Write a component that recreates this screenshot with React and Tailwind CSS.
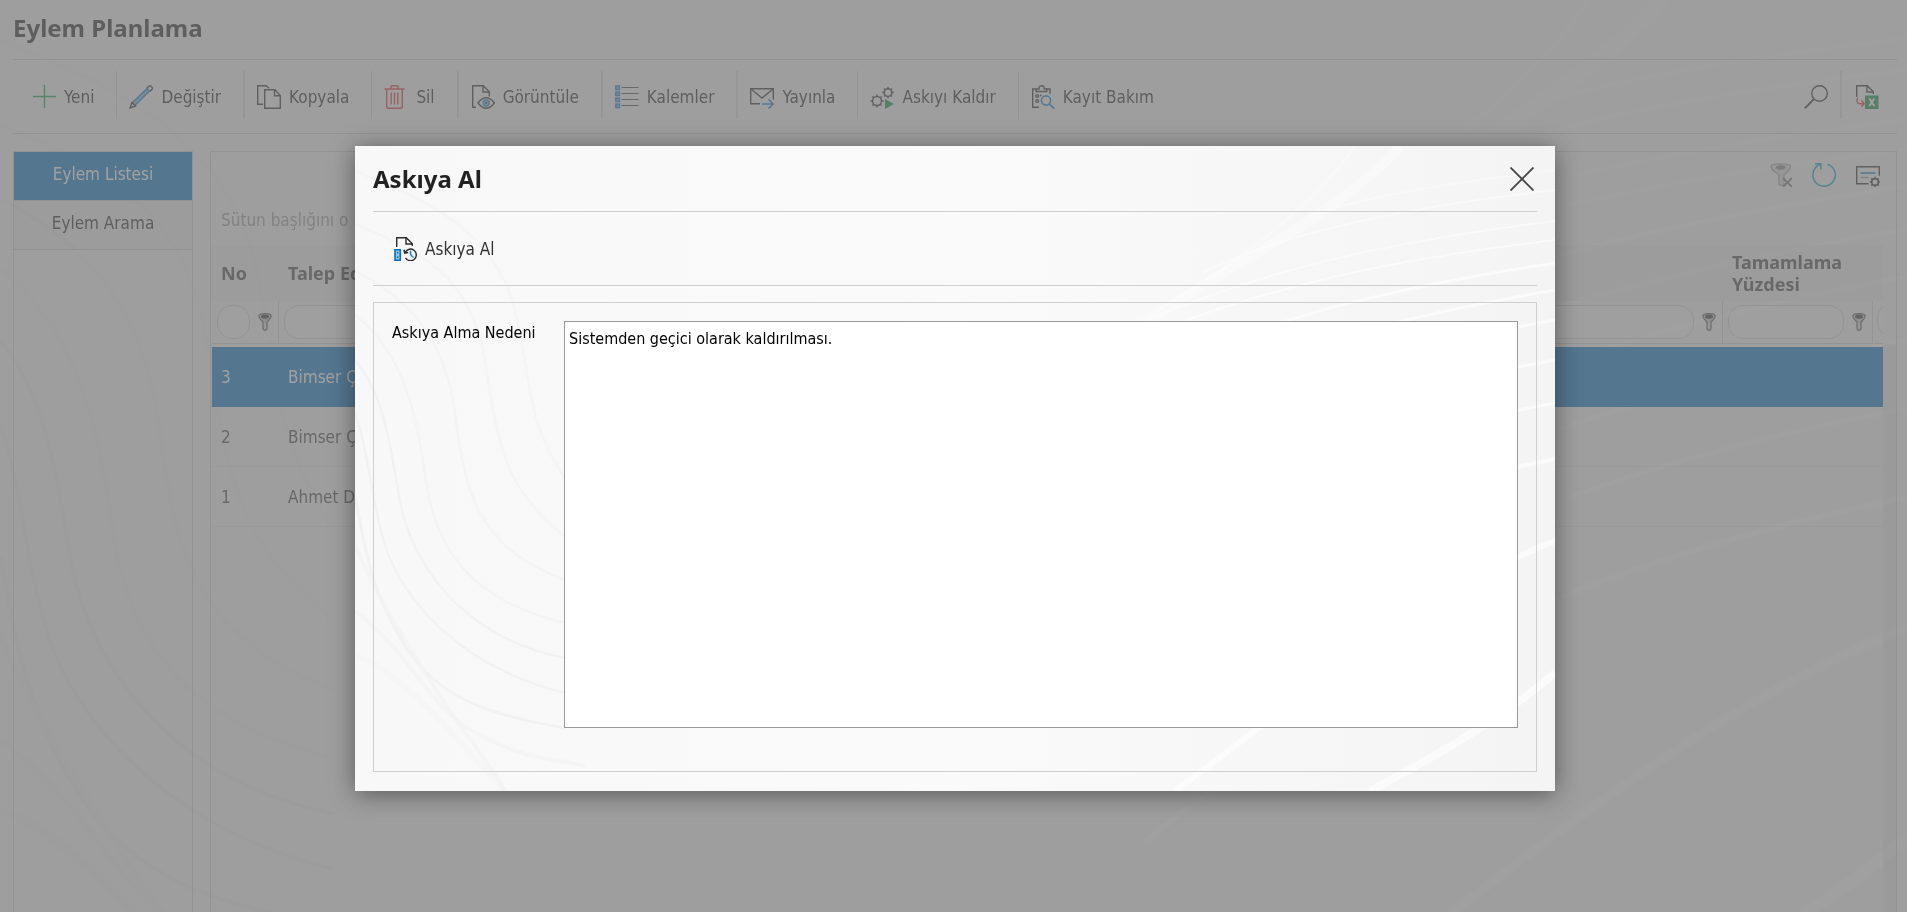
import React, { useState } from 'react';

const DARK = '#2b2b2b';
const BLUE = '#0e7cc9';
const RED = '#e03038';
const GREEN = '#0c8f45';

function Icon({ children, size = 24 }) {
  return (
    <svg
      width={size}
      height={size}
      viewBox="0 0 24 24"
      fill="none"
      stroke={DARK}
      strokeWidth="1.4"
      className="shrink-0"
      aria-hidden="true"
    >
      {children}
    </svg>
  );
}

const PlusIcon = () => (
  <Icon>
    <path d="M1 11.500h23M12.500 0v23" stroke="#0aa650" />
  </Icon>
);

const PencilIcon = () => (
  <Icon>
    <path d="M3.500 17.500 18 3.500l2.500 2.500L6 20.500z" fill="#7db9e4" stroke={BLUE} />
    <path d="m18 3 1.800-1.700a1.500 1.500 0 0 1 2.200 0l.9.9a1.500 1.500 0 0 1 0 2.200L21 6.500" />
    <path d="M3 17.500 1 23l5.500-2z" />
  </Icon>
);

const CopyIcon = () => (
  <Icon>
    <path d="M6 19.300H.7V.7H9l3 2.500" />
    <path d="M7.700 4.700h10.300l5.300 5.800v12.800H7.700z" />
    <path d="M17.500 5v5.800h5.800" />
  </Icon>
);

const TrashIcon = () => (
  <Icon>
    <g stroke={RED}>
      <path d="M.5 4h20M7 4V1.500q0-.8.8-.8h5.400q.8 0 .8.800V4" />
      <path d="M2.700 4v17.500q0 1.800 1.800 1.800h12q1.800 0 1.800-1.800V4" />
      <path d="M7.200 7.500v12M10.500 7.500v12M13.800 7.500v12" />
    </g>
  </Icon>
);

const PreviewIcon = () => (
  <Icon>
    <path d="M5 22.300H1.700V.7h10.600l6 6v4.800" />
    <path d="M12 1v6h6" />
    <path d="M7 18q8.200-10.500 16.400 0-8.200 10.500-16.400 0z" />
    <circle cx="15.200" cy="18" r="3" stroke={BLUE} fill="#7db9e4" />
    <circle cx="15.200" cy="18" r="1" fill={DARK} stroke="none" />
  </Icon>
);

const ListIcon = () => (
  <Icon>
    {[1, 7, 13, 19].map((y) => (
      <g key={y}>
        <rect x=".8" y={y} width="3.600" height="3.600" stroke={BLUE} fill="#7db9e4" />
        <path d={`M6.500 ${y + 1.5}H23.500`} stroke="#444" strokeWidth="1" />
      </g>
    ))}
  </Icon>
);

const MailIcon = () => (
  <Icon>
    <path d="M10 18.800H.7V3.700h22.600v11" />
    <path d="m1 4 11 9 11-9" />
    <path d="M12 19h11M18.500 14.200 23.200 19l-4.700 4.500" stroke={BLUE} strokeWidth="1.600" />
  </Icon>
);

const GearsIcon = () => (
  <Icon>
    <circle cx="7" cy="16" r="4.500" />
    <path d="M7 9.500v2M7 20.500v2M.5 16h2M11.500 16h2M2.400 11.400l1.400 1.400M10.200 19.200l1.400 1.400M2.400 20.600l1.400-1.400M10.200 12.800l1.400-1.400" />
    <circle cx="18" cy="7.500" r="3.800" />
    <path d="M18 1.800v1.900M18 11.300v1.900M12.300 7.500h1.900M21.800 7.500h1.900M14 3.500l1.300 1.300M20.700 10.200 22 11.500M14 11.500l1.300-1.300M20.700 4.800 22 3.500" />
    <path d="M15 14v10l9-5z" fill={GREEN} stroke="none" />
  </Icon>
);

const ClipboardIcon = () => (
  <Icon>
    <path d="M8 22.300H1.700V4h3M15 4h4v5" />
    <path d="M5 6.500V4h3q0-3.300 2.700-3.300T13.300 4h2.500v2.500z" />
    <circle cx="6.200" cy="11" r="1.400" />
    <circle cx="6.200" cy="16" r="1.400" />
    <path d="M9 10.500h1.500" />
    <circle cx="15" cy="15.500" r="4.600" stroke={BLUE} strokeWidth="1.600" />
    <path d="m18.300 18.800 5 5" stroke={BLUE} strokeWidth="1.800" />
  </Icon>
);

const SearchIcon = () => (
  <Icon>
    <circle cx="15.500" cy="8.500" r="7.800" />
    <path d="M10 14 .8 23.300" strokeWidth="1.800" />
  </Icon>
);

const ExcelIcon = () => (
  <Icon>
    <path d="M1.700 12V.7h10.600l6 6V9" />
    <path d="M12 1v6h6" />
    <path d="M2.500 13q-2 5 2.500 5.800h4M6.500 15.500 9.200 18.800l-2.700 3" stroke={RED} />
    <path d="M10 10.500h13.500V24H10z" fill={GREEN} stroke="none" />
    <path d="m14.300 13.500 5 7.500M19.300 13.500l-5 7.500" stroke="#fff" strokeWidth="2" />
  </Icon>
);

const ClearFilterIcon = () => (
  <Icon>
    <path
      d="M3 3.500C3 0 22.500 0 22.500 3.500c0 4-4.500 6-6.500 8.500v9q-2.500 3-5 0v-9C9 9.500 3 7.500 3 3.500z"
      fill="#dedede"
      stroke="#a5a5a5"
    />
    <ellipse cx="12.800" cy="4.500" rx="4.800" ry="2.200" fill="#8a8a8a" stroke="none" />
    <path d="m15 15 9 9M24 15l-9 9" stroke="#777" strokeWidth="1.800" />
  </Icon>
);

const RefreshIcon = () => (
  <Icon>
    <path d="M15.500 1.300A11.200 11.200 0 1 1 7.800 1.600" stroke="#05aabd" strokeWidth="1.600" />
    <path d="M3 .9h5.800v5.600" stroke="#05aabd" strokeWidth="1.600" />
  </Icon>
);

const SettingsIcon = () => (
  <Icon>
    <path d="M12.500 20.800H.7V3.700h22.600v9" />
    <path d="M4.500 10h15" stroke={BLUE} strokeWidth="1.600" />
    <path d="M4.500 14.500h8" stroke="#999" />
    <circle cx="19" cy="19" r="3.300" strokeWidth="1.600" />
    <path
      d="M19 13.700v2M19 22.300v1.700M13.700 19h2M22.300 19H24M15.300 15.300l1.300 1.300M21.400 21.400l1.300 1.300M15.300 22.700l1.300-1.300M21.400 16.600l1.300-1.300"
      strokeWidth="1.600"
    />
  </Icon>
);

const SuspendIcon = () => (
  <Icon>
    <path d="M3.700 10V.7h9.600l6 6V9" />
    <path d="M13 1v6h6" />
    <path d="M2 12.700h5.300v10.600H2z" fill="#8cc6ee" stroke="#0b6cb8" strokeWidth="1.600" />
    <path d="M4.700 15v1.500M4.700 19.500V21" stroke="#0b6cb8" />
    <path d="M12.300 15.300a5.800 5.800 0 1 1 .2 5.500" />
    <path d="m11 12.800.8 3.300 3.400-.6" strokeWidth="1.600" />
    <path d="M17.500 13.500v4l3 3" stroke={BLUE} />
  </Icon>
);

const FunnelIcon = () => (
  <svg width="14" height="18" viewBox="0 0 14 18" className="shrink-0" aria-hidden="true">
    <path
      d="M.8 3C.8-.2 13.200-.2 13.200 3c0 3-3.200 4.500-4.200 6.200V16q-2 2.800-4 0V9.200C4 7.500.8 6 .8 3z"
      fill="#c4c4c4"
      stroke="#555"
      strokeWidth="1.200"
    />
    <ellipse cx="7" cy="3.600" rx="4" ry="2.200" fill="#333" />
    <path d="M7 10v5.500" stroke="#fff" />
  </svg>
);

const toolbarItems = [
  { label: 'Yeni', icon: PlusIcon, border: 'border-r border-[#d4d4d4]' },
  { label: 'Değiştir', icon: PencilIcon, border: 'border-r-2 border-[#dedede]' },
  { label: 'Kopyala', icon: CopyIcon, border: 'border-r border-[#d4d4d4]' },
  { label: 'Sil', icon: TrashIcon, border: 'border-r-2 border-[#dedede]' },
  { label: 'Görüntüle', icon: PreviewIcon, border: 'border-r-2 border-[#dedede]' },
  { label: 'Kalemler', icon: ListIcon, border: 'border-r-2 border-[#dedede]' },
  { label: 'Yayınla', icon: MailIcon, border: 'border-r border-[#d4d4d4]' },
  { label: 'Askıyı Kaldır', icon: GearsIcon, border: 'border-r border-[#d4d4d4]' },
  { label: 'Kayıt Bakım', icon: ClipboardIcon, border: 'border-r-0' },
];

const rows = [
  { no: 3, owner: 'Bimser Ç' },
  { no: 2, owner: 'Bimser Ç' },
  { no: 1, owner: 'Ahmet D' },
];

// Soft curved lines behind the page and the dialog
function Waves() {
  return (
    <svg
      className="absolute inset-0 h-full w-full"
      viewBox="0 0 1200 645"
      preserveAspectRatio="xMidYMin slice"
      fill="none"
      aria-hidden="true"
    >
      <g stroke="#f2f2f2" strokeWidth="2.500">
        <path d="M0 25C60 50 140 80 160 165S170 270 210 333" opacity=".5" />
        <path d="M0 78C50 100 115 120 130 215S150 340 210 391" opacity=".6" />
        <path d="M0 125C50 150 90 190 100 267S120 400 210 434" opacity=".8" />
        <path d="M0 169C40 200 60 250 70 329S120 455 210 477" opacity=".8" />
        <path d="M0 214C30 250 35 300 45 355S100 490 210 512" />
        <path d="M0 267C15 310 15 350 30 399S100 520 210 547" />
        <path d="M0 350C10 400 15 445 50 500S140 570 210 582" strokeWidth="3" />
        <path d="M0 399C20 450 60 510 85 550S130 610 150 645" strokeWidth="4" opacity=".8" />
        <path d="M0 465C60 510 70 560 123 588S190 610 230 620" strokeWidth="4" opacity=".6" />
        <path d="M0 510C40 520 100 590 150 645" strokeWidth="6" opacity=".4" />
      </g>
      <g stroke="#fff" strokeWidth="3" opacity=".6">
        <path d="M740 215C810 160 870 125 907 104S1010 40 1046 0" strokeWidth="10" opacity=".5" />
        <path d="M740 195C860 140 960 60 1000 0" opacity=".4" />
        <path d="M966 67C1010 50 1110 35 1200 24" strokeWidth="2" opacity=".6" />
        <path d="M848 127C930 85 1060 60 1200 44" strokeWidth="2" opacity=".7" />
        <path d="M797 172C900 130 1000 100 1200 75" strokeWidth="2" opacity=".8" />
        <path d="M831 174C940 135 1050 112 1200 94" strokeWidth="2" opacity=".9" />
        <path d="M820 215C940 165 1050 140 1200 117" />
        <path d="M800 260C930 200 1050 170 1200 144" />
        <path d="M780 310C900 250 1050 200 1200 174" />
        <path d="M760 370C900 290 1050 240 1200 214" />
        <path d="M740 440C900 330 1050 285 1200 257" />
        <path d="M720 530C880 400 1040 345 1200 313" strokeWidth="4" />
        <path d="M820 645C950 550 1060 450 1200 395" strokeWidth="6" />
        <path d="M1015 645C1090 605 1150 570 1200 527" strokeWidth="8" />
      </g>
    </svg>
  );
}

function FilterCell({ label }) {
  return (
    <td className="h-[43px] border-r border-b border-[#d4d4d4] p-0">
      <div className="flex h-[42px] items-start gap-2 pt-1 pr-[6px] pl-[5px]">
        <input
          aria-label={label}
          className="h-[34px] w-0 min-w-0 flex-1 rounded-[15px] border border-[#d4d4d4] bg-white/30 px-2 outline-none"
        />
        <button type="button" aria-label={`${label} filtresi`} className="mt-2">
          <FunnelIcon />
        </button>
      </div>
    </td>
  );
}

function ActionGrid() {
  return (
    <div className="flex flex-1 pl-px">
      <div className="min-w-0 flex-1 overflow-hidden">
        <table className="w-full table-fixed border-separate border-spacing-0 text-left text-[#444]">
          <colgroup>
            <col className="w-[67px]" />
            <col className="w-[400px]" />
            <col />
            <col className="w-[150px]" />
            <col className="w-[10px]" />
          </colgroup>
          <thead>
            <tr className="h-14 bg-black/3 font-['Noto_Sans',sans-serif] text-lg leading-[22px]">
              <th className="px-[9px] py-0 font-bold">No</th>
              <th className="px-[9px] py-0 font-bold">Talep Ed</th>
              <th />
              <th className="px-[9px] py-0 font-bold">Tamamlama Yüzdesi</th>
              <th />
            </tr>
            <tr>
              <FilterCell label="No" />
              <FilterCell label="Talep Eden" />
              <FilterCell label="Açıklama" />
              <FilterCell label="Tamamlama Yüzdesi" />
              <td className="border-b border-[#d4d4d4] p-0">
                <div className="mb-1 ml-1 h-[34px] w-8 rounded-[15px] border border-[#d4d4d4] bg-white/30" />
              </td>
            </tr>
          </thead>
          <tbody>
            <tr className="h-[3px]">
              <td colSpan={5} className="p-0" />
            </tr>
            {rows.map((row, i) => (
              <tr key={row.no} className={i === 0 ? 'h-[60px] bg-[#0072c6] text-white' : 'h-[60px]'}>
                <td className="border-b border-black/5 px-[9px] py-0">{row.no}</td>
                <td className="border-b border-black/5 px-[9px] py-0">{row.owner}</td>
                <td className="border-b border-black/5" />
                <td className="border-b border-black/5" />
                <td className="border-b border-black/5" />
              </tr>
            ))}
          </tbody>
        </table>
      </div>
      {/* Scrollbar track */}
      <div className="flex w-[13px] flex-col pt-[99px]">
        <div className="flex-1 rounded-t-sm bg-black/5" />
      </div>
    </div>
  );
}

function SuspendDialog() {
  const [reason, setReason] = useState('Sistemden geçici olarak kaldırılması.');

  return (
    <div className="fixed inset-0 flex items-start justify-center bg-[#777]/70 pt-[146px] pl-[3px]">
      <div
        role="dialog"
        aria-labelledby="dialog-title"
        className="relative w-[1200px] max-w-full bg-linear-to-r from-[#f8f8f8] via-[#fafafa] to-[#f4f4f4] shadow-[0_3px_24px_rgba(0,0,0,0.45)]"
      >
        <Waves />
        <div className="relative px-[18px] pb-[19px]">
          <div className="flex items-center justify-between border-b border-[#cfcfcf] pt-[17px] pr-[3px] pb-4">
            <h2
              id="dialog-title"
              className="font-['Noto_Sans',sans-serif] text-2xl leading-8 font-bold text-[#222]"
            >
              Askıya Al
            </h2>
            <button type="button" aria-label="Kapat">
              <svg width="24" height="24" viewBox="0 0 24 24" stroke="#444" strokeWidth="1.800">
                <path d="M.5.5 23.500 23.500M23.500.5.5 23.500" />
              </svg>
            </button>
          </div>

          <div className="flex border-b border-[#cfcfcf] pt-[11px] pb-[14px]">
            <button type="button" className="flex h-12 items-center gap-2 pt-1 pl-5 text-[#333]">
              <SuspendIcon />
              Askıya Al
            </button>
          </div>

          <form className="mt-4 flex items-start border border-[#cfcfcf] px-[18px] pt-[18px] pb-[43px]">
            <label htmlFor="reason" className="w-[172px] shrink-0 text-base leading-6 text-black">
              Askıya Alma Nedeni
            </label>
            <textarea
              id="reason"
              value={reason}
              onChange={(e) => setReason(e.target.value)}
              className="h-[407px] min-w-0 flex-1 resize-none border border-[#999] bg-white px-1 py-[5px] text-base leading-6 text-black outline-none"
            />
          </form>
        </div>
      </div>
    </div>
  );
}

export default function App() {
  return (
    <div className="relative h-screen overflow-hidden bg-[#f9f9f9] font-['DejaVu_Sans_Condensed','DejaVu_Sans',sans-serif] text-[17px] leading-6 text-[#222]">
      <Waves />
      <div className="relative flex h-full flex-col pr-[10px] pl-[13px]">
        <h1 className="border-b border-[#d0d0d0] pt-3 pb-[15px] font-['Noto_Sans',sans-serif] text-2xl leading-8 font-bold">
          Eylem Planlama
        </h1>

        {/* ===== Toolbar ===== */}
        <div className="flex items-center border-b border-[#d0d0d0] pt-[11px] pr-[18px] pb-[14px] pl-[7px]">
          {toolbarItems.map(({ label, icon: ItemIcon, border }) => (
            <button
              key={label}
              type="button"
              className={`flex h-12 items-center gap-2 pt-1 pr-[22px] pl-3 whitespace-nowrap ${border}`}
            >
              <ItemIcon />
              {label}
            </button>
          ))}
          <button
            type="button"
            aria-label="Ara"
            className="ml-auto flex h-12 items-center border-r-2 border-[#dedede] pt-1 pr-3"
          >
            <SearchIcon />
          </button>
          <button type="button" aria-label="Excel" className="flex h-12 items-center pt-1 pl-[13px]">
            <ExcelIcon />
          </button>
        </div>

        <div className="mt-[17px] flex min-h-0 flex-1 gap-[17px]">
          {/* ===== Tabs ===== */}
          <nav className="w-[180px] shrink-0 border border-b-0 border-[#d0d0d0]">
            <button
              type="button"
              className="flex h-[49px] w-full items-center justify-center border-b border-[#d0d0d0] bg-[#0072c6] pb-1 text-white"
            >
              Eylem Listesi
            </button>
            <button
              type="button"
              className="flex h-[49px] w-full items-center justify-center border-b border-[#c8c8c8] bg-black/3 pb-1"
            >
              Eylem Arama
            </button>
          </nav>

          {/* ===== Grid ===== */}
          <section className="flex min-w-0 flex-1 flex-col border border-b-0 border-[#d0d0d0]">
            <div className="flex justify-end gap-5 pt-[11px] pr-4">
              <button type="button" aria-label="Filtreyi temizle">
                <ClearFilterIcon />
              </button>
              <button type="button" aria-label="Yenile">
                <RefreshIcon />
              </button>
              <button type="button" aria-label="Ayarlar">
                <SettingsIcon />
              </button>
            </div>
            <p className="mt-[21px] mb-[13px] pl-[10px] text-[#999]">Sütun başlığını o</p>
            <ActionGrid />
          </section>
        </div>
      </div>

      <SuspendDialog />
    </div>
  );
}
